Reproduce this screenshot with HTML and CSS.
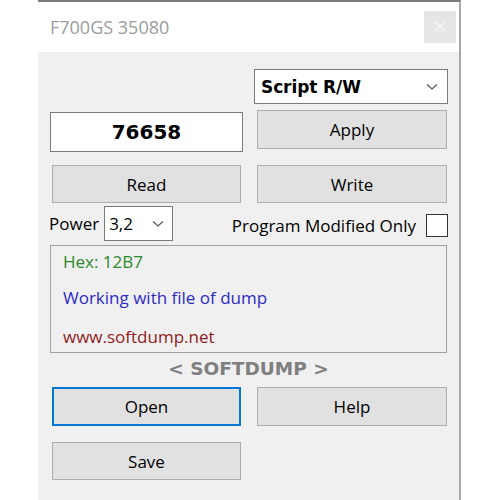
FILE: index.html
```html
<!DOCTYPE html>
<html>
<head>
    <meta name="viewport" content="width=device-width, initial-scale=1.0">
    <link rel="stylesheet" href="styles.css">
</head>
<body>
    <!-- window -->
    <div class="window">
        <div class="titlebar">
            <span class="title">F700GS 35080</span>
            <button class="close-button" aria-label="Close">&times;</button>
        </div>

        <div class="content">
            <!-- mode -->
            <div class="row row-mode">
                <div></div>
                <div class="combo combo-mode">
                    <span>Script R/W</span>
                    <svg width="12" height="8" viewBox="0 0 12 8"><polyline points="1,1.5 6,6 11,1.5" fill="none" stroke="#555" stroke-width="1.2" /></svg>
                </div>
            </div>

            <div class="row row-value">
                <div class="value-box">76658</div>
                <button class="btn btn-right btn-apply">Apply</button>
            </div>

            <div class="row row-rw">
                <button class="btn btn-left">Read</button>
                <button class="btn btn-right">Write</button>
            </div>

            <div class="row-power">
                <span class="label">Power</span>
                <div class="combo combo-power">
                    <span>3,2</span>
                    <svg width="12" height="8" viewBox="0 0 12 8"><polyline points="1,1.5 6,6 11,1.5" fill="none" stroke="#555" stroke-width="1.2" /></svg>
                </div>
                <span class="label label-modified">Program Modified Only</span>
                <span class="checkbox"></span>
            </div>

            <!-- info -->
            <div class="info">
                <div class="info-hex">Hex: 12B7</div>
                <div class="info-work">Working with file of dump</div>
                <div class="info-site">www.softdump.net</div>
            </div>

            <div class="brand">&lt; SOFTDUMP &gt;</div>

            <div class="row row-open">
                <button class="btn btn-left btn-focus">Open</button>
                <button class="btn btn-right">Help</button>
            </div>

            <div class="row row-save">
                <button class="btn btn-left">Save</button>
            </div>
        </div>
    </div>
</body>
</html>
```

FILE: styles.css
```css
/* base */
body {
    margin: 0;
    padding: 0;
    background-color: #ffffff;
    font-family: 'Open Sans', 'Noto Sans', Arial, sans-serif;
}

.window {
    margin-left: 38px;
    width: 421px;
    height: 498px;
    border-top: 2px solid #7d7d7d;
    border-right: 2px solid #a8a8a8;
    background-color: #f0f0f0;
    overflow: hidden;
}

/* title bar */
.titlebar {
    height: 50px;
    background-color: #ffffff;
    display: flex;
    align-items: center;
    justify-content: space-between;
    padding: 0 3px 0 12px;
}

.title {
    color: #9c9c9c;
    font-size: 18px;
}

.close-button {
    width: 32px;
    height: 32px;
    border: none;
    background-color: #e6e6e6;
    color: #f4f4f4;
    font-size: 22px;
    padding: 0;
    line-height: 32px;
}

/* content */
.content {
    padding: 17px 0 0 12px;
}

.row {
    display: grid;
    grid-template-columns: 193px 194px;
    column-gap: 11px;
}

.row-mode {
    height: 35px;
}

.combo {
    background-color: #ffffff;
    border: 1px solid #7a7a7a;
    display: flex;
    align-items: center;
    justify-content: space-between;
    box-sizing: border-box;
}

.combo-mode {
    height: 35px;
    padding: 0 9px 0 6px;
    font-family: 'DejaVu Sans', Verdana, sans-serif;
    font-weight: bold;
    font-size: 17px;
    letter-spacing: -0.1px;
}

.row-value {
    margin-top: 6px;
    height: 42px;
}

.value-box {
    margin-top: 2px;
    height: 40px;
    box-sizing: border-box;
    border: 1px solid #7a7a7a;
    background-color: #ffffff;
    display: flex;
    align-items: center;
    justify-content: center;
    font-family: 'DejaVu Sans', Verdana, sans-serif;
    font-weight: bold;
    font-size: 20px;
}

.btn {
    height: 39px;
    box-sizing: border-box;
    background-color: #e1e1e1;
    border: 1px solid #adadad;
    font-family: inherit;
    font-size: 17px;
    color: #000000;
    padding: 0;
}

.btn-left {
    margin: 0 2px;
}

.btn-right {
    margin: 0 1px 0 3px;
}

.row-rw {
    margin-top: 13px;
}

.row-rw .btn {
    height: 38px;
}

/* power row */
.row-power {
    margin-top: 3px;
    height: 35px;
    display: flex;
    align-items: center;
}

.label {
    font-size: 17px;
    color: #000000;
    margin-left: -1px;
}

.combo-power {
    margin-left: 5px;
    width: 69px;
    height: 35px;
    padding: 0 8px 0 4px;
    font-size: 17px;
}

.label-modified {
    margin-left: auto;
    margin-right: 10px;
    margin-top: 3px;
}

.checkbox {
    width: 20px;
    height: 21px;
    border: 1px solid #333333;
    background-color: #ffffff;
    margin-right: 11px;
    margin-top: 4px;
}

/* info box */
.info {
    margin-top: 4px;
    width: 397px;
    height: 108px;
    box-sizing: border-box;
    border: 1px solid #a0a0a0;
    padding: 3px 0 0 12px;
    font-size: 17px;
}

.info-hex {
    color: #2b8a2b;
    line-height: 26px;
}

.info-work {
    color: #2c2cc4;
    line-height: 46px;
}

.info-site {
    color: #8e2222;
    line-height: 32px;
}

.brand {
    width: 397px;
    text-align: center;
    font-family: 'DejaVu Sans', Verdana, sans-serif;
    font-weight: bold;
    font-size: 18.5px;
    color: #7f7f7f;
    height: 34px;
    line-height: 32px;
}

.row-open .btn {
    height: 39px;
}

.btn-focus {
    border: 2px solid #0078d7;
}

.row-save {
    margin-top: 16px;
}

.row-save .btn {
    height: 38px;
}
```
